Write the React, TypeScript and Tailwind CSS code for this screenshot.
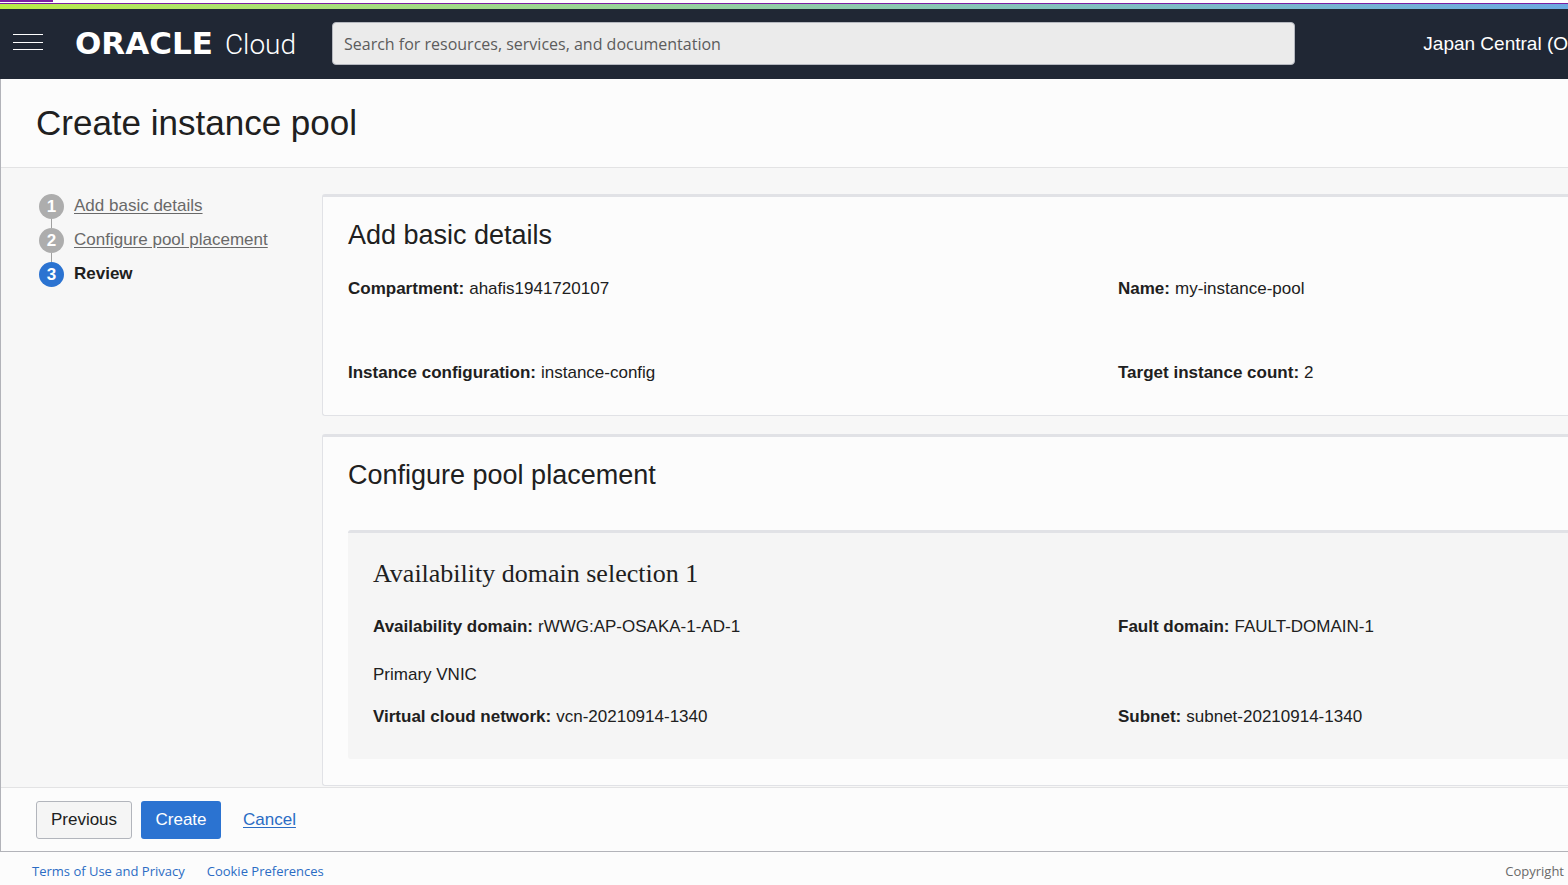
import type { ReactNode } from "react";

function Field({ label, children }: { label: string; children: ReactNode }) {
  return (
    <div className="flex gap-[5px]">
      <dt className="font-bold">{label}:</dt>
      <dd>{children}</dd>
    </div>
  );
}

function Card({ title, children }: { title: string; children: ReactNode }) {
  return (
    <section className="rounded-l-[3px] border border-t-3 border-r-0 border-[#e1e2e6] bg-[#fcfcfc] pb-[26px] pl-[25px] pt-5">
      <h2 className="text-[27px] leading-9">{title}</h2>
      {children}
    </section>
  );
}

function Step({ number, label, current, last }: { number: number; label: string; current?: boolean; last?: boolean }) {
  return (
    <li className="flex gap-[10px]">
      <div className="flex w-[25px] flex-col items-center">
        <span
          className={
            current
              ? "flex h-[25px] w-[25px] items-center justify-center rounded-full bg-[#2b73d1] font-bold text-white"
              : "flex h-[25px] w-[25px] items-center justify-center rounded-full bg-[#adadad] font-bold text-white"
          }
        >
          {number}
        </span>
        {!last && <span className="h-[9px] w-px bg-[#a0a0a0]" />}
      </div>
      {current ? (
        <span className="font-bold leading-6" aria-current="step">{label}</span>
      ) : (
        <a href="#" className="leading-6 text-[#696969] underline underline-offset-2">{label}</a>
      )}
    </li>
  );
}

export default function App() {
  return (
    <div className="flex min-h-screen flex-col overflow-hidden whitespace-nowrap bg-[#fcfcfc] font-['Liberation_Sans',sans-serif] text-[17px] leading-6 text-[#202020]">
      <div className="h-1 border-b border-[#7b1fa2] bg-white">
        <div className="h-0.5 w-[53px] bg-[#7b1fa2]" />
      </div>
      <div className="h-[5px] bg-linear-to-r from-[#b9eb45] to-[#6ca9e0]" />

      <header className="flex h-[70px] items-center bg-[#202734] pb-0.5 pl-[13px] text-white">
        <button type="button" aria-label="Navigation menu" className="w-[30px]">
          <svg viewBox="0 0 30 18" className="block h-[18px] w-[30px]" shapeRendering="crispEdges">
            <path d="M0 0.5h30M0 8.5h30M0 15.5h30" stroke="white" strokeWidth="1" />
          </svg>
        </button>
        <a href="#" className="ml-8 flex w-[257px] items-baseline gap-3 pt-0.5">
          <span className="font-['DejaVu_Sans',sans-serif] text-[31px] font-bold leading-9">ORACLE</span>
          <span className="font-['Roboto',sans-serif] text-[28px] font-light leading-9">Cloud</span>
        </a>
        <input
          type="search"
          aria-label="Search"
          placeholder="Search for resources, services, and documentation"
          className="h-[43px] min-w-0 flex-1 rounded-[4px] border border-[#b5b8bf] bg-[#ebebeb] px-[11px] pt-0.5 font-['Open_Sans',sans-serif] text-base text-[#202020] placeholder:text-[#5c5c5c]"
        />
        <button type="button" className="ml-32 shrink-0 pt-0.5 text-left text-[19px]">
          Japan Central (O
        </button>
      </header>

      <main className="flex flex-1 flex-col border-b border-l border-[#b2b3b9]">
        <div className="border-b border-[#e3e3e4] py-[22px] pl-[35px]">
          <h1 className="text-[35px] leading-[44px]">Create instance pool</h1>
        </div>

        <div className="flex flex-1 bg-[#f7f7f7] pb-px pl-[38px] pt-[26px]">
          <nav aria-label="Steps" className="w-[283px] shrink-0">
            <ol>
              <Step number={1} label="Add basic details" />
              <Step number={2} label="Configure pool placement" />
              <Step number={3} label="Review" current last />
            </ol>
          </nav>

          <div className="flex min-w-0 flex-1 flex-col gap-[18px]">
            <Card title="Add basic details">
              <dl className="mt-[24px] grid grid-cols-[770fr_450fr] gap-y-[60px] pb-1">
                <Field label="Compartment">ahafis1941720107</Field>
                <Field label="Name">my-instance-pool</Field>
                <Field label="Instance configuration">instance-config</Field>
                <Field label="Target instance count">2</Field>
              </dl>
            </Card>

            <Card title="Configure pool placement">
              <div className="mt-[37px] rounded-l-[3px] border-t-3 border-[#e1e2e6] bg-[#f5f5f5] pb-[30px] pl-[25px] pt-[23px]">
                <h3 className="font-['Liberation_Serif',serif] text-[26px] leading-9">Availability domain selection 1</h3>
                <dl className="mt-[23px] grid grid-cols-[745fr_450fr]">
                  <Field label="Availability domain">rWWG:AP-OSAKA-1-AD-1</Field>
                  <Field label="Fault domain">FAULT-DOMAIN-1</Field>
                </dl>
                <h4 className="mt-6">Primary VNIC</h4>
                <dl className="mt-[18px] grid grid-cols-[745fr_450fr]">
                  <Field label="Virtual cloud network">vcn-20210914-1340</Field>
                  <Field label="Subnet">subnet-20210914-1340</Field>
                </dl>
              </div>
            </Card>
          </div>
        </div>

        <div className="flex items-center border-t border-[#e3e3e4] py-3 pl-[35px] pt-[13px]">
          <button type="button" className="h-[38px] w-24 rounded-[3px] border border-[#b2b5bc] bg-[#f5f5f5] text-center">
            Previous
          </button>
          <button type="button" className="ml-[9px] h-[38px] w-20 rounded-[3px] bg-[#2b73d1] text-center text-white">
            Create
          </button>
          <a href="#" className="ml-[22px] text-[#2b6cc4] underline underline-offset-2">Cancel</a>
        </div>
      </main>

      <footer className="flex h-[33px] items-center gap-[22px] pl-8 pr-1 pt-1 font-['Open_Sans',sans-serif] text-[13px] leading-5">
        <a href="#" className="text-[#2b6cc4]">Terms of Use and Privacy</a>
        <a href="#" className="text-[#2b6cc4]">Cookie Preferences</a>
        <span className="ml-auto text-[#696969]">Copyright</span>
      </footer>
    </div>
  );
}
